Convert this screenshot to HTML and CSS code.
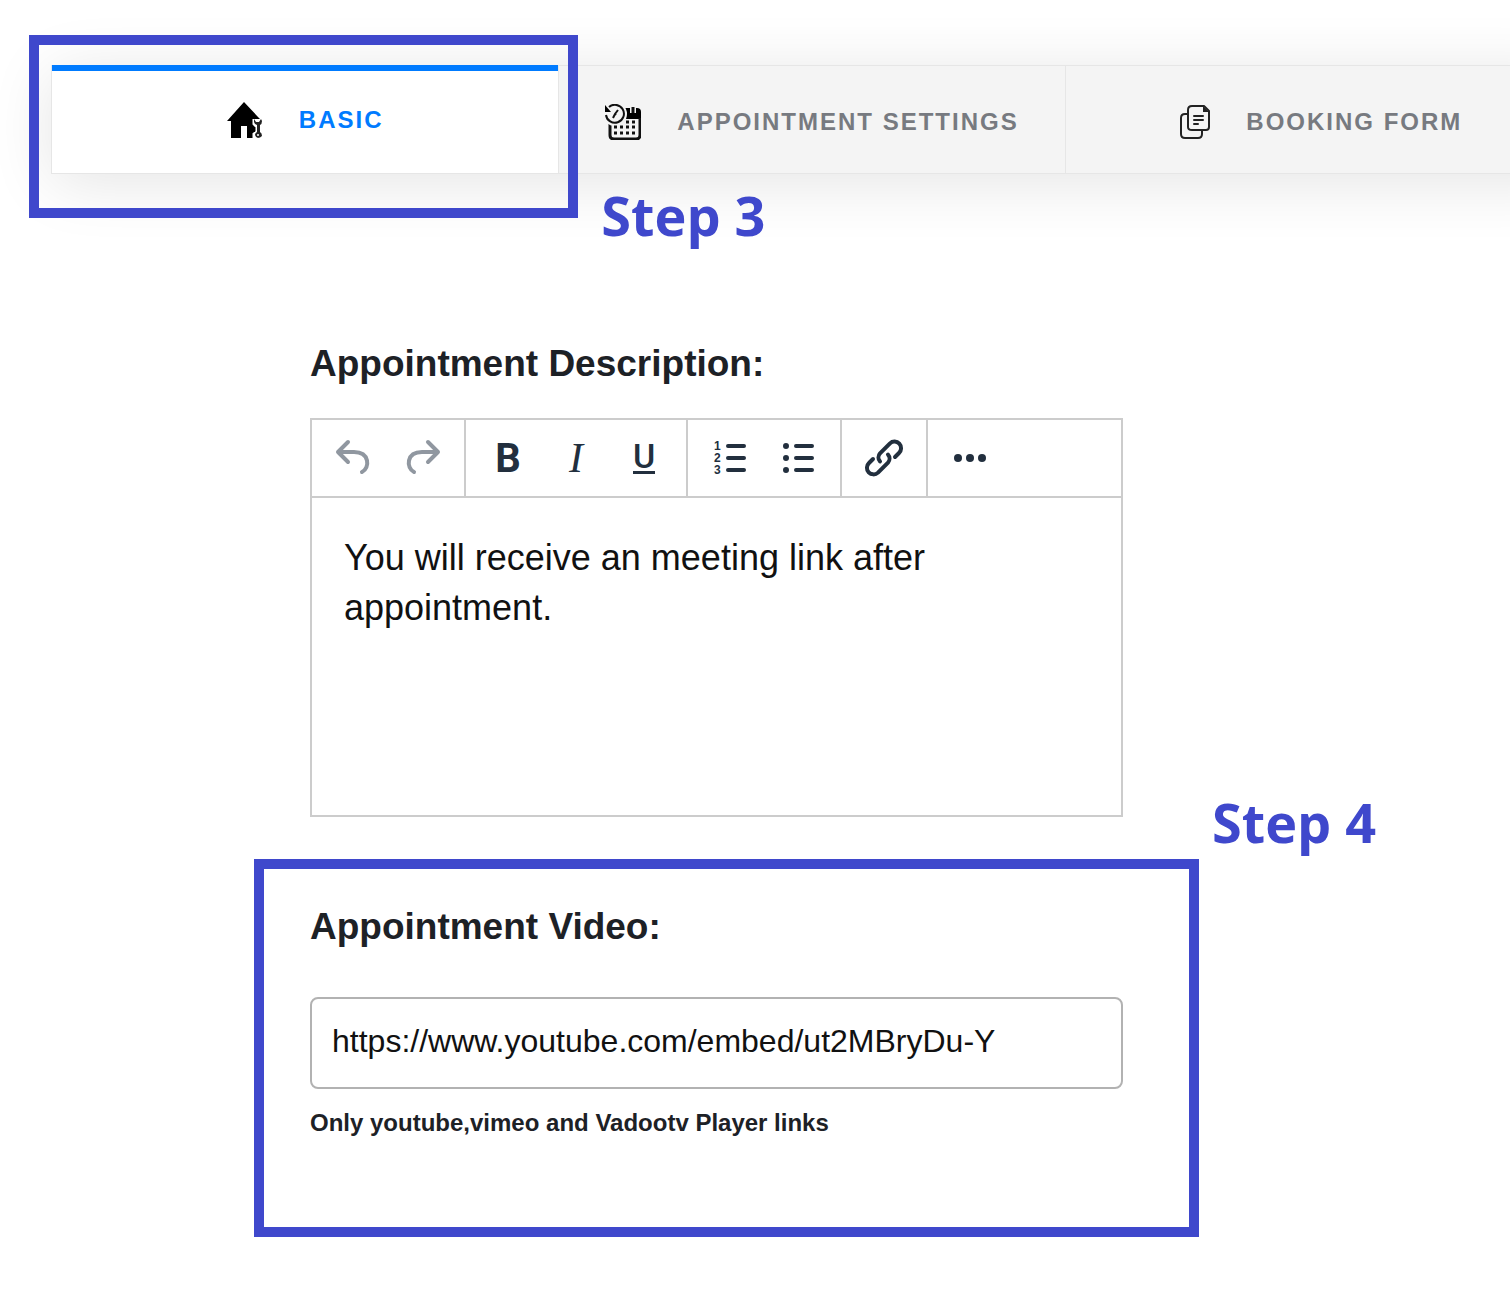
FILE: index.html
```html
<!DOCTYPE html>
<html lang="en">

<head>
  <meta charset="UTF-8" />
  <meta name="viewport" content="width=device-width, initial-scale=1.0" />
  <title>Appointment - Basic</title>
  <link rel="stylesheet" href="styles.css">
</head>

<body>
  <nav class="tabs">
    <div class="tab_item">
      <a href="#basic" class="tab active">
        <svg class="tab_icon" viewBox="0 0 36 36">
          <path d="M17 0 0 19h4v17h10V24h6v12h7l3-7V17h3L31 15z" />
          <path d="M27 17v5l3 3v5l-3 2v4h8v-4l-2-2v-5l3-3v-5" fill="#fff" stroke="#fff" stroke-width="3" />
          <path d="M27 17v3q1 3 3 3v7q-2 1-2 3 1 3 3 3t4-2q0-3-2-4v-7q2-1 2-4l-1-2-2 3h-3z" fill="#222" />
          <circle cx="31" cy="33" r="1" fill="#fff" />
        </svg>
        <span>BASIC</span>
      </a>
      <div class="highlight">
        <strong class="step">Step 3</strong>
      </div>
    </div>

    <div class="tab_item">
      <a href="#settings" class="tab">
        <svg class="tab_icon" viewBox="0 0 36 36">
          <path d="M20 4h12q4 0 4 4v7H20z" />
          <path d="M5 20v11q0 4 4 4h22q4 0 4-4V14" fill="none" stroke="#111" stroke-width="3" />
          <circle cx="10" cy="10" r="12" fill="#f4f4f4" />
          <path d="M4 3a9 9 0 1 1-3 8" fill="none" stroke="#111" stroke-width="2" />
          <path d="M0 1v7h6z" />
          <path d="m8 14 2-4 3-4M10 10l1 1" fill="none" stroke="#111" stroke-width="2" />
          <path d="M28 1v8" fill="none" stroke="#f4f4f4" stroke-width="6" />
          <path d="M28 3v6" fill="none" stroke="#111" stroke-width="3" />
          <path d="M21 18h9" fill="none" stroke="#111" stroke-width="3" stroke-dasharray="3 3" />
          <path d="M9 23h21M9 29h21" fill="none" stroke="#111" stroke-width="3" stroke-dasharray="3 3" />
        </svg>
        <span>APPOINTMENT SETTINGS</span>
      </a>
    </div>

    <div class="tab_item">
      <a href="#booking" class="tab">
        <svg class="tab_icon" viewBox="-5 0 36 36">
          <g fill="none" stroke="#222" stroke-width="2" stroke-linejoin="round" stroke-linecap="round">
            <path d="M8 10H6q-4 0-4 4v16q0 4 4 4h13q4 0 4-4v-3" />
            <path d="M13 2h12l5 5v16q0 3-3 3H13q-4 0-4-3V6q0-4 4-4z" />
            <path d="M15 12h9M15 16h9M15 20h4" />
          </g>
          <path d="M24 2v6h6z" fill="#222" />
        </svg>
        <span>BOOKING FORM</span>
      </a>
    </div>
  </nav>

  <form class="form">
    <section class="field">
      <label class="field_title" for="description">Appointment Description:</label>

      <div class="editor">
        <div class="toolbar">
          <div class="tool_group">
            <button type="button" class="tool disabled" aria-label="Undo">
              <svg viewBox="0 0 24 24"><path d="M9 4 4 9l5 5M4 9h8c8 0 8 8 4 10" /></svg>
            </button>
            <button type="button" class="tool disabled" aria-label="Redo">
              <svg viewBox="0 0 24 24"><path d="m15 4 5 5-5 5M20 9h-8c-8 0-8 8-4 10" /></svg>
            </button>
          </div>
          <div class="tool_group">
            <button type="button" class="tool bold" aria-label="Bold">B</button>
            <button type="button" class="tool italic" aria-label="Italic">I</button>
            <button type="button" class="tool underline" aria-label="Underline"><span>U</span></button>
          </div>
          <div class="tool_group">
            <button type="button" class="tool" aria-label="Numbered list">
              <svg viewBox="0 0 24 24">
                <path d="M11 6h8M11 12h8M11 18h8" />
                <text x="4" y="8">1</text>
                <text x="4" y="14">2</text>
                <text x="4" y="20">3</text>
              </svg>
            </button>
            <button type="button" class="tool" aria-label="Bullet list">
              <svg viewBox="0 0 24 24">
                <path d="M11 6h8M11 12h8M11 18h8" />
                <path d="M6 6h0M6 12h0M6 18h0" class="bullets" />
              </svg>
            </button>
          </div>
          <div class="tool_group">
            <button type="button" class="tool" aria-label="Link">
              <svg viewBox="0 0 24 24">
                <path d="m6.500 12.500-2 2a2.900 2.900 0 0 0 4.500 4.800l5-5a3 3 0 0 0 0-4M17.500 11.500l2-2a2.900 2.900 0 0 0-4.500-4.800l-5 5a3 3 0 0 0 0 4" />
              </svg>
            </button>
          </div>
          <div class="tool_group">
            <button type="button" class="tool" aria-label="More">
              <svg viewBox="0 0 24 24" class="dots">
                <circle cx="6" cy="12" r="2" />
                <circle cx="12" cy="12" r="2" />
                <circle cx="18" cy="12" r="2" />
              </svg>
            </button>
          </div>
        </div>
        <textarea class="editor_text" id="description" spellcheck="false">You will receive an meeting link after appointment.</textarea>
      </div>
    </section>

    <section class="field video">
      <strong class="step">Step 4</strong>
      <label class="field_title" for="video">Appointment Video:</label>
      <input type="text" class="textField" id="video" value="https://www.youtube.com/embed/ut2MBryDu-Y" spellcheck="false" />
      <p class="hint">Only youtube,vimeo and Vadootv Player links</p>
    </section>
  </form>
</body>

</html>
```

FILE: styles.css
```css
* {
  box-sizing: border-box;
}

body {
  margin: 0;
  overflow-x: hidden;
  font-family: "Liberation Sans", Arial, sans-serif;
  color: #1d2126;
  background: #fff;
}

/* Tabs, the last one runs off the right edge */
.tabs {
  display: grid;
  grid-template-columns: repeat(3, 1fr);
  margin: 65px -62px 0 51px;
  border: 1px solid #e6e6e6;
  border-top: 0;
  box-shadow: 0 8px 64px rgba(0, 0, 0, 0.11);
}

.tab_item {
  position: relative;
}

.tab_item + .tab_item {
  border-left: 1px solid #e6e6e6;
}

.tab {
  display: flex;
  align-items: center;
  justify-content: center;
  gap: 36px;
  height: 108px;
  padding-top: 4px;
  border-top: 1px solid #e6e6e6;
  background: #f4f4f4;
  color: #777a80;
  font-size: 24px;
  font-weight: bold;
  letter-spacing: 2px;
  text-decoration: none;
}

.tab.active {
  background: #fff;
  color: #007bff;
  border-top: 6px solid #007bff;
  padding: 0 0 4px;
}

.tab_icon {
  width: 36px;
  height: 36px;
}

/* Step markers */
.highlight {
  position: absolute;
  z-index: 1;
  inset: -30px -20px -45px -23px;
  border: 10px solid #3f48cc;
  pointer-events: none;
}

.step {
  position: absolute;
  color: #3f48cc;
  font-family: "Open Sans", sans-serif;
  font-size: 54px;
  line-height: 64px;
  white-space: nowrap;
}

.highlight .step {
  top: 138px;
  left: calc(100% + 33px);
}

.video .step {
  top: -79px;
  left: calc(100% + 23px);
}

/* Form */
.form {
  max-width: 945px;
  margin: 168px 56px 61px 254px;
}

.field {
  padding: 0 76px 0 56px;
}

.field_title {
  display: block;
  margin-bottom: 32px;
  font-size: 37px;
  line-height: 44px;
  font-weight: bold;
}

.editor {
  border: 2px solid #ccc;
}

.toolbar {
  display: flex;
  border-bottom: 2px solid #ccc;
}

.tool_group {
  display: flex;
  padding: 0 8px;
  border-right: 2px solid #ccc;
}

.tool_group:last-child {
  border-right: 0;
}

.tool {
  display: flex;
  align-items: center;
  justify-content: center;
  width: 68px;
  height: 76px;
  padding: 0;
  border: 0;
  background: transparent;
  color: #222f3e;
}

.tool svg {
  width: 48px;
  height: 48px;
  fill: none;
  stroke: currentColor;
  stroke-width: 2;
  stroke-linecap: round;
  stroke-linejoin: round;
}

.tool svg text {
  font: bold 6px "Liberation Sans", Arial, sans-serif;
  fill: currentColor;
  stroke: none;
}

.tool .bullets {
  stroke-width: 3;
}

.tool .dots {
  fill: currentColor;
  stroke: none;
}

.tool.disabled {
  color: #9097a0;
}

.bold {
  font: bold 40px Roboto, sans-serif;
}

.italic {
  font: italic 42px "Liberation Serif", serif;
}

.underline {
  font: 500 34px Roboto, sans-serif;
}

.underline span {
  line-height: 29px;
  border-bottom: 3px solid currentColor;
}

.editor_text {
  display: block;
  width: 100%;
  height: 317px;
  padding: 35px 32px;
  border: 0;
  outline: 0;
  resize: none;
  background: transparent;
  color: #111;
  font: 36px/50px "Liberation Sans", Arial, sans-serif;
}

.video {
  position: relative;
  margin-top: 42px;
  padding: 36px 66px 89px 46px;
  border: 10px solid #3f48cc;
}

.video .field_title {
  margin-bottom: 48px;
}

.textField {
  display: block;
  width: 100%;
  height: 92px;
  padding: 0 20px 4px;
  border: 2px solid #b2b2b2;
  border-radius: 8px;
  outline: 0;
  color: #111;
  font: 32px "Liberation Sans", Arial, sans-serif;
}

.hint {
  margin: 19px 0 0;
  font-size: 24px;
  line-height: 30px;
  font-weight: bold;
}
```
